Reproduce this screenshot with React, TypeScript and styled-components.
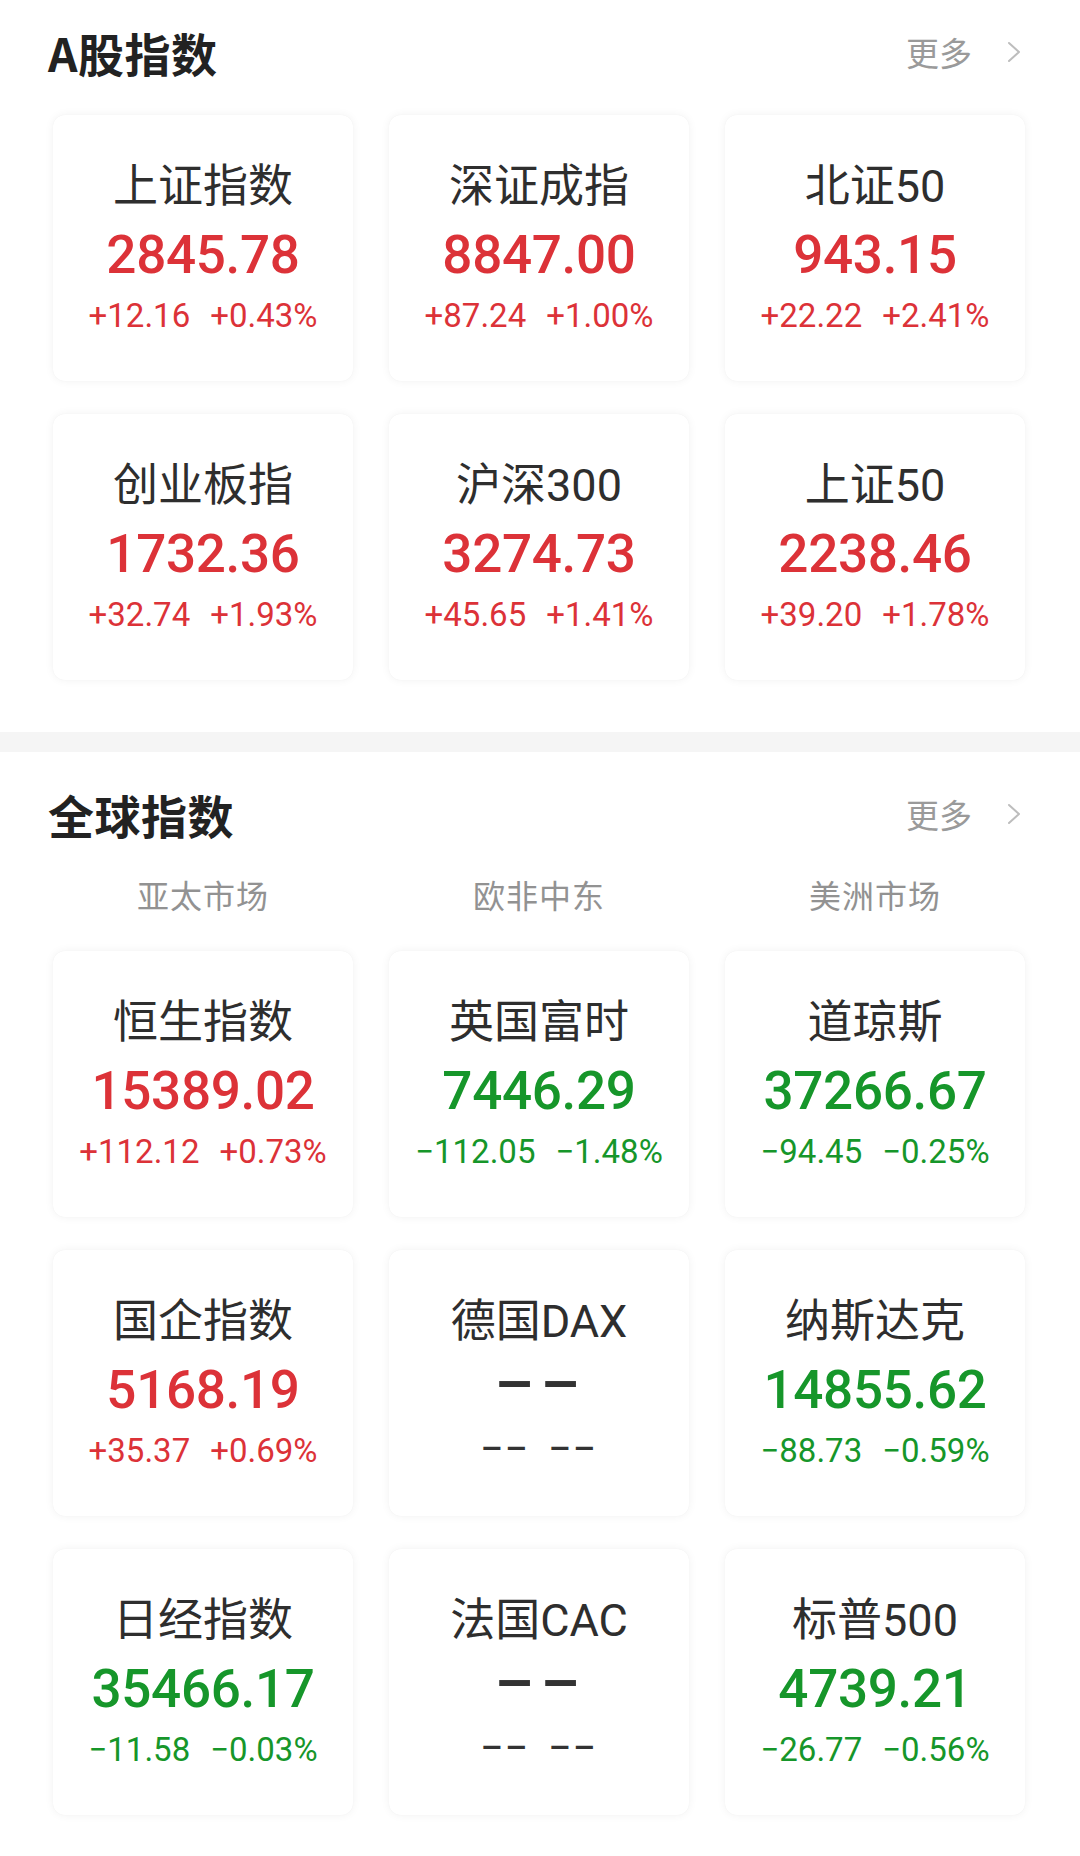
import React from "react";
import styled, { createGlobalStyle } from "styled-components";

const Global = createGlobalStyle`
  html, body { margin: 0; padding: 0; background: #ffffff; }
  body { width: 1080px; font-family: Roboto, "Noto Sans CJK SC", sans-serif; }
  * { box-sizing: border-box; }
`;

const Page = styled.div`
  width: 1080px;
  height: 1856px;
  background: #fff;
  overflow: hidden;
`;

const Section = styled.section<{ $top?: number }>`
  padding: 0 55px 0 53px;
  margin-top: ${(p) => p.$top ?? 0}px;
`;

const Header = styled.div`
  height: 104px;
  display: flex;
  align-items: center;
  justify-content: space-between;
`;

const Title = styled.h2`
  margin: 0 0 0 -5px;
  font-family: "Noto Sans CJK SC", sans-serif;
  font-weight: 700;
  font-size: 46px;
  color: #222;
  letter-spacing: 0.5px;
`;

const More = styled.div`
  display: flex;
  align-items: center;
  gap: 35px;
  padding-right: 4px;
  font-family: "Noto Sans CJK SC", sans-serif;
  font-size: 33px;
  color: #9a9a9a;
`;

const Divider = styled.div`
  height: 20px;
  background: #f5f5f5;
  margin-top: 52px;
`;

const Tabs = styled.div`
  display: grid;
  grid-template-columns: repeat(3, 300px);
  column-gap: 36px;
  height: 56px;
  align-items: center;
`;

const Tab = styled.div`
  text-align: center;
  font-family: "Noto Sans CJK SC", sans-serif;
  font-size: 32px;
  color: #929292;
  letter-spacing: 1px;
`;

const Grid = styled.div<{ $top: number }>`
  display: grid;
  grid-template-columns: repeat(3, 300px);
  grid-auto-rows: 266px;
  column-gap: 36px;
  row-gap: 33px;
  margin-top: ${(p) => p.$top}px;
`;

const Card = styled.div`
  background: #fff;
  border-radius: 12px;
  box-shadow: 0 0 10px rgba(0, 0, 0, 0.055), 0 0 1px rgba(0, 0, 0, 0.06);
  display: flex;
  flex-direction: column;
  align-items: center;
  padding-top: 46px;
`;

const Name = styled.div`
  font-family: Roboto, "Noto Sans CJK SC", sans-serif;
  font-size: 45px;
  line-height: 52px;
  color: #2e2e2e;
  white-space: nowrap;
`;

type Tone = "up" | "down" | "none";
const toneColor = (t: Tone) => (t === "up" ? "#dc3238" : t === "down" ? "#16962a" : "#333333");

const Value = styled.div<{ $tone: Tone }>`
  font-family: Roboto, sans-serif;
  font-weight: 500;
  font-size: 53px;
  line-height: 64px;
  margin-top: ${(p) => (p.$tone === "none" ? 2 : 10)}px;
  color: ${(p) => toneColor(p.$tone)};
  letter-spacing: -0.3px;
  white-space: nowrap;
`;

const Change = styled.div<{ $tone: Tone }>`
  display: flex;
  gap: ${(p) => (p.$tone === "none" ? 44 : 20)}px;
  font-family: Roboto, sans-serif;
  font-size: 33px;
  line-height: 40px;
  margin-top: ${(p) => (p.$tone === "none" ? 14 : 9)}px;
  color: ${(p) => toneColor(p.$tone)};
  white-space: nowrap;
`;

const BigDash = styled.span`
  display: inline-block;
  transform: scaleX(2.1);
  letter-spacing: 1px;
  font-weight: 700;
`;

const SmallDash = styled.span`
  display: inline-block;
  transform: scaleX(2);
  letter-spacing: 1px;
  font-weight: 500;
`;

type Item = { name: string; value: string; chg: string; pct: string; tone: Tone };

const aShares: Item[] = [
  { name: "上证指数", value: "2845.78", chg: "+12.16", pct: "+0.43%", tone: "up" },
  { name: "深证成指", value: "8847.00", chg: "+87.24", pct: "+1.00%", tone: "up" },
  { name: "北证50", value: "943.15", chg: "+22.22", pct: "+2.41%", tone: "up" },
  { name: "创业板指", value: "1732.36", chg: "+32.74", pct: "+1.93%", tone: "up" },
  { name: "沪深300", value: "3274.73", chg: "+45.65", pct: "+1.41%", tone: "up" },
  { name: "上证50", value: "2238.46", chg: "+39.20", pct: "+1.78%", tone: "up" },
];

const globalIdx: Item[] = [
  { name: "恒生指数", value: "15389.02", chg: "+112.12", pct: "+0.73%", tone: "up" },
  { name: "英国富时", value: "7446.29", chg: "-112.05", pct: "-1.48%", tone: "down" },
  { name: "道琼斯", value: "37266.67", chg: "-94.45", pct: "-0.25%", tone: "down" },
  { name: "国企指数", value: "5168.19", chg: "+35.37", pct: "+0.69%", tone: "up" },
  { name: "德国DAX", value: "--", chg: "--", pct: "--", tone: "none" },
  { name: "纳斯达克", value: "14855.62", chg: "-88.73", pct: "-0.59%", tone: "down" },
  { name: "日经指数", value: "35466.17", chg: "-11.58", pct: "-0.03%", tone: "down" },
  { name: "法国CAC", value: "--", chg: "--", pct: "--", tone: "none" },
  { name: "标普500", value: "4739.21", chg: "-26.77", pct: "-0.56%", tone: "down" },
];

const Chevron = () => (
  <svg width="14" height="22" viewBox="0 0 14 22" fill="none">
    <path d="M2 2 L12 11 L2 20" stroke="#bdbdbd" strokeWidth="2" strokeLinecap="round" strokeLinejoin="round" />
  </svg>
);

const IndexCard = ({ item }: { item: Item }) => (
  <Card>
    <Name>{item.name}</Name>
    <Value $tone={item.tone}>{item.tone === "none" ? <BigDash>--</BigDash> : item.value}</Value>
    <Change $tone={item.tone}>
      {item.tone === "none" ? (
        <>
          <SmallDash>--</SmallDash>
          <SmallDash>--</SmallDash>
        </>
      ) : (
        <>
          <span>{item.chg.replace("-", "−")}</span>
          <span>{item.pct.replace("-", "−")}</span>
        </>
      )}
    </Change>
  </Card>
);

const SectionHeader = ({ title }: { title: string }) => (
  <Header>
    <Title>{title}</Title>
    <More>
      <span>更多</span>
      <Chevron />
    </More>
  </Header>
);

export default function App() {
  return (
    <Page>
      <Global />
      <Section>
        <SectionHeader title="A股指数" />
        <Grid $top={11}>
          {aShares.map((it) => (
            <IndexCard key={it.name} item={it} />
          ))}
        </Grid>
      </Section>
      <Divider />
      <Section $top={10}>
        <SectionHeader title="全球指数" />
        <Tabs>
          <Tab>亚太市场</Tab>
          <Tab>欧非中东</Tab>
          <Tab>美洲市场</Tab>
        </Tabs>
        <Grid $top={29}>
          {globalIdx.map((it) => (
            <IndexCard key={it.name} item={it} />
          ))}
        </Grid>
      </Section>
    </Page>
  );
}
